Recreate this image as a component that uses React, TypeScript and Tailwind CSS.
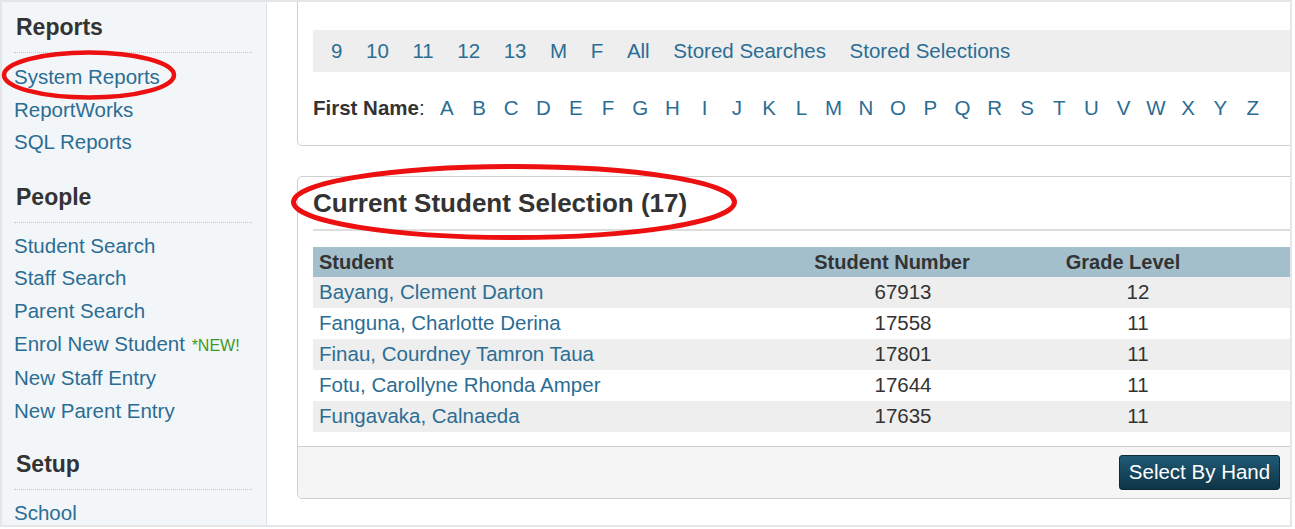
import React from "react";

const LINK = "text-[#2b6d93]";

function Section({ title, links, gapClass, listGap }: { title: string; links: React.ReactNode[]; gapClass: string; listGap: string }) {
  return (
    <div className={gapClass}>
      <h2 className="text-[23px] font-bold leading-[28px] text-[#333] pl-[2px]">{title}</h2>
      <div className="mt-[11px] border-b border-dotted border-[#bfc4c8]" />
      <ul className={listGap}>
        {links.map((l, i) => (
          <li key={i} className={`text-[20.5px] leading-[32.6px] ${LINK} whitespace-nowrap`}>
            {l}
          </li>
        ))}
      </ul>
    </div>
  );
}

const filters = ["9", "10", "11", "12", "13", "M", "F", "All", "Stored Searches", "Stored Selections"];
const letters = "ABCDEFGHIJKLMNOPQRSTUVWXYZ".split("");

const rows = [
  ["Bayang, Clement Darton", "67913", "12"],
  ["Fanguna, Charlotte Derina", "17558", "11"],
  ["Finau, Courdney Tamron Taua", "17801", "11"],
  ["Fotu, Carollyne Rhonda Amper", "17644", "11"],
  ["Fungavaka, Calnaeda", "17635", "11"],
];

export default function App() {
  return (
    <div className="relative w-[1295px] h-[529px] bg-white overflow-hidden font-['Liberation_Sans',Arial,sans-serif]">
      <div className="w-[1292px] h-[527px] border-2 border-[#e6e6e6] flex overflow-hidden">
        {/* Sidebar */}
        <aside className="w-[265px] shrink-0 bg-[#f3f6f9] border-r border-[#dfe4ea] pl-[12px] pr-[14px] pt-[11px]">
          <Section gapClass="" listGap="mt-[8px]" title="Reports" links={["System Reports", "ReportWorks", "SQL Reports"]} />
          <Section
            gapClass="mt-[24px]"
            listGap="mt-[7px]"
            title="People"
            links={[
              "Student Search",
              "Staff Search",
              "Parent Search",
              <span>
                Enrol New Student <span className="text-[16px] text-[#3c9a27] ml-[1px]">*NEW!</span>
              </span>,
              "New Staff Entry",
              "New Parent Entry",
            ]}
          />
          <Section gapClass="mt-[23px]" listGap="mt-[7px]" title="Setup" links={["School"]} />
        </aside>

        {/* Main */}
        <main className="flex-1 overflow-hidden pl-[30px]">
          {/* Panel 1 */}
          <div className="w-[1020px] border border-t-0 border-[#cfcfcf] rounded-b-[5px] pl-[15px] pt-[28px] pb-[25px]">
            <div className={`h-[42px] bg-[#eeeeee] flex items-center pl-[18px] gap-[23.6px] text-[20.5px] ${LINK} whitespace-nowrap`}>
              {filters.map((f) => (
                <span key={f}>{f}</span>
              ))}
            </div>
            <div className="mt-[24px] h-[24px] leading-[24px] flex items-center text-[20.5px] whitespace-nowrap">
              <span className="font-bold text-[#333]">First Name</span>
              <span className="text-[#333]">:</span>
              <span className="w-[6px]" />
              {letters.map((l) => (
                <span key={l} className={`w-[32.24px] text-center ${LINK}`}>
                  {l}
                </span>
              ))}
            </div>
          </div>

          {/* Panel 2 */}
          <div className="mt-[30px] w-[1020px] border border-[#cfcfcf] rounded-[5px] overflow-hidden">
            <div className="px-[15px] pb-[14px]">
              <div className="pt-[11px] pb-[11px] border-b-2 border-[#dddddd]">
                <h1 className="text-[26px] font-bold leading-[30px] text-[#333]">Current Student Selection (17)</h1>
              </div>
              <div className="mt-[16px] text-[20.5px] whitespace-nowrap">
                <div className="grid grid-cols-[487px_206px_264px_1fr] h-[30px] items-center bg-[#a4bfcc] font-bold text-[#333] text-[20px]">
                  <div className="pl-[6px]">Student</div>
                  <div className="text-center pr-[22px]">Student Number</div>
                  <div className="text-center pr-[30px]">Grade Level</div>
                  <div />
                </div>
                {rows.map((r, i) => (
                  <div
                    key={r[1]}
                    className={`grid grid-cols-[487px_206px_264px_1fr] h-[31px] items-center ${i % 2 === 0 ? "bg-[#eeeeee]" : "bg-white"}`}
                  >
                    <div className={`pl-[6px] ${LINK}`}>{r[0]}</div>
                    <div className="text-center text-[#333]">{r[1]}</div>
                    <div className="text-center text-[#333]">{r[2]}</div>
                    <div />
                  </div>
                ))}
              </div>
            </div>
            <div className="h-[52px] border-t border-[#d0d0d0] bg-[#f5f5f5] flex items-center justify-end pr-[36px]">
              <button className="w-[161px] h-[35px] rounded-[3px] border border-[#0b2b3a] bg-gradient-to-b from-[#215a74] to-[#0d3548] text-white text-[20.5px] leading-none flex items-center justify-center whitespace-nowrap">
                Select By Hand
              </button>
            </div>
          </div>
        </main>
      </div>

      {/* Annotation ellipses */}
      <svg className="absolute left-0 top-0 pointer-events-none" width="1295" height="529" viewBox="0 0 1295 529">
        <ellipse cx="89" cy="75" rx="85" ry="22.5" fill="none" stroke="#ec1010" strokeWidth="4.5" />
        <ellipse cx="514" cy="202" rx="220.5" ry="35.5" fill="none" stroke="#ec1010" strokeWidth="5" />
      </svg>
    </div>
  );
}
